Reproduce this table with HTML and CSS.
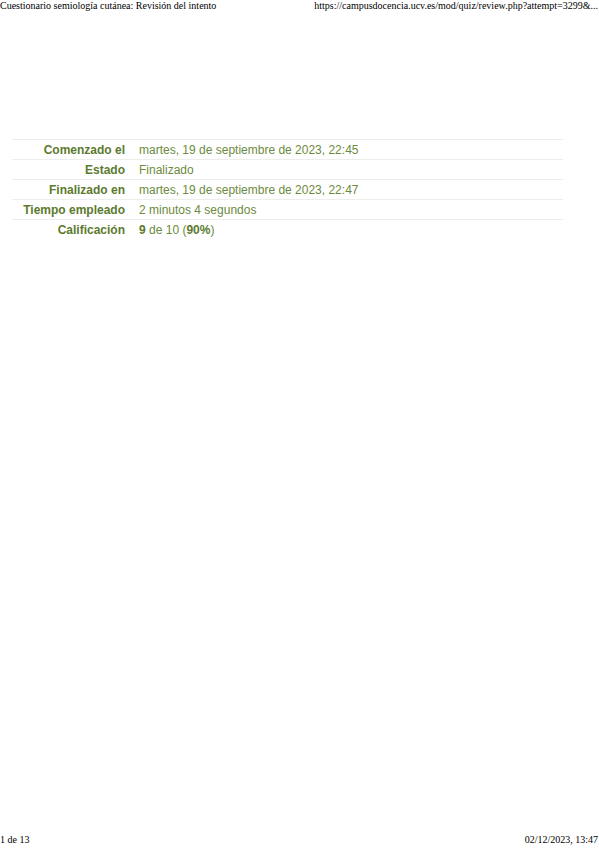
FILE: index.html
```html
<!DOCTYPE html>
<html lang="es">
<head>
<meta charset="utf-8">
<title>Cuestionario semiología cutánea: Revisión del intento</title>
<link rel="stylesheet" href="styles.css">
</head>
<body>
<div class="page">
  <header class="print-header">
    <span class="ph-title">Cuestionario semiología cutánea: Revisión del intento</span>
    <span class="ph-url">https://campusdocencia.ucv.es/mod/quiz/review.php?attempt=3299&amp;...</span>
  </header>
  <main class="content">
    <table class="summary">
      <tbody>
        <tr><th>Comenzado el</th><td>martes, 19 de septiembre de 2023, 22:45</td></tr>
        <tr><th>Estado</th><td>Finalizado</td></tr>
        <tr><th>Finalizado en</th><td>martes, 19 de septiembre de 2023, 22:47</td></tr>
        <tr><th>Tiempo empleado</th><td>2 minutos 4 segundos</td></tr>
        <tr><th>Calificación</th><td><b>9</b> de 10 (<b>90%</b>)</td></tr>
      </tbody>
    </table>
  </main>
  <footer class="print-footer">
    <span>1 de 13</span>
    <span>02/12/2023, 13:47</span>
  </footer>
</div>
</body>
</html>
```

FILE: styles.css
```css
html, body {
  margin: 0;
  padding: 0;
  background: #fff;
}
.page {
  width: 599px;
  height: 848px;
  display: flex;
  flex-direction: column;
  font-family: "Liberation Serif", "Times New Roman", serif;
  color: #000;
}
.print-header {
  display: flex;
  justify-content: space-between;
  font-size: 10px;
  line-height: 12px;
  white-space: nowrap;
  padding-top: 0;
}
.ph-url {
  padding-right: 1px;
}
.content {
  flex: 1;
  padding: 127px 36px 0 12px;
}
.summary {
  width: 100%;
  border-collapse: collapse;
  font-family: "Liberation Sans", Arial, sans-serif;
  font-size: 12px;
}
.summary tr {
  border-top: 1px solid #eceeeb;
}
.summary th {
  width: 113px;
  text-align: right;
  font-weight: bold;
  color: #5b7a2e;
  padding: 0 14px 0 0;
  height: 19px;
  white-space: nowrap;
}
.summary td {
  text-align: left;
  color: #6c8a3d;
  padding: 0;
  height: 19px;
}
.summary td b {
  color: #5b7a2e;
}
.print-footer {
  display: flex;
  justify-content: space-between;
  font-size: 10px;
  line-height: 12px;
  padding: 0 1px 2px 0;
}
```
